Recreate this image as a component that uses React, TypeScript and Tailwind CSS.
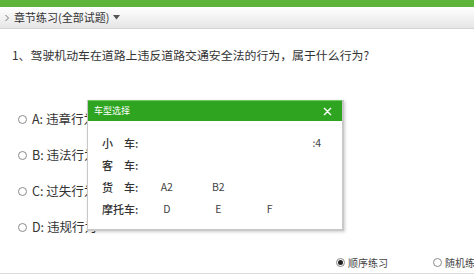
import React from 'react'

const options = ['A: 违章行为', 'B: 违法行为', 'C: 过失行为', 'D: 违规行为']

const carRows: { label: string; items: string[] }[] = [
  { label: '小\u3000车:', items: ['', '', '', ':4'] },
  { label: '客\u3000车:', items: [] },
  { label: '货\u3000车:', items: ['A2', 'B2'] },
  { label: '摩托车:', items: ['D', 'E', 'F'] },
]

function Radio({ checked = false }: { checked?: boolean }) {
  return (
    <span className="flex h-[9px] w-[9px] shrink-0 items-center justify-center rounded-full border border-[#8a8a8a] bg-white">
      {checked && <span className="h-[5px] w-[5px] rounded-full bg-[#222]" />}
    </span>
  )
}

function CarDialog() {
  return (
    <div className="absolute left-[87px] top-[100px] flex h-[131px] w-[257px] flex-col border-r-[2px] border-b-[2px] border-l border-[#c9c9c9] bg-white shadow-[1px_1px_3px_rgba(0,0,0,0.2)]">
      <div className="flex h-[21px] items-center justify-between border-t border-[#6fcb5f] bg-[#2ea420] pl-[6px] pr-[10px]">
        <span className="text-[9px] text-white">车型选择</span>
        <svg width="9" height="9" viewBox="0 0 10 10" className="text-white">
          <path d="M1.5 1.5l7 7M8.5 1.5l-7 7" stroke="currentColor" strokeWidth="1.5" strokeLinecap="round" />
        </svg>
      </div>
      <div className="flex flex-col pl-[14px] pt-[11px]">
        {carRows.map((row) => (
          <div key={row.label} className="flex h-[22px] items-center text-[11px] text-[#333]">
            <span className="w-[39px] font-medium">{row.label}</span>
            {row.items.map((item, i) => (
              <span key={i} className="w-[51.5px] text-center text-[10.5px] text-[#444]">
                {item}
              </span>
            ))}
          </div>
        ))}
      </div>
    </div>
  )
}

export default function App() {
  return (
    <div className="relative flex h-[276px] w-[474px] flex-col overflow-hidden bg-white font-['Noto_Sans_CJK_SC',sans-serif] text-[#333]">
      <div className="h-[7px] bg-[#5fb43c]" />
      <div className="flex h-[22px] items-center gap-[4px] border-b border-[#d4d4d4] bg-gradient-to-b from-white to-[#e6e6e6] pl-[4px]">
        <svg width="6" height="8" viewBox="0 0 6 8">
          <path d="M1.5 1l3 3-3 3" fill="none" stroke="#777" strokeWidth="1" />
        </svg>
        <span className="text-[11px] text-[#333]">章节练习(全部试题)</span>
        <svg width="7" height="5" viewBox="0 0 7 5">
          <path d="M0 0h7L3.5 4.5z" fill="#555" />
        </svg>
      </div>

      <p className="mt-[18px] pl-[12px] text-[11.9px] leading-[16px] text-[#333]">
        1、驾驶机动车在道路上违反道路交通安全法的行为，属于什么行为?
      </p>

      <div className="mt-[46px] flex flex-col gap-[16px] pl-[18px]">
        {options.map((o) => (
          <label key={o} className="flex h-[20px] items-center gap-[5px] text-[12.5px] text-[#333]">
            <Radio />
            <span>{o}</span>
          </label>
        ))}
      </div>

      <div className="mt-auto mb-[2px] flex h-[22px] items-center gap-[45px] whitespace-nowrap border-b border-[#dcdcdc] pl-[336px] text-[10px] text-[#444]">
        <span className="flex items-center gap-[3px]">
          <Radio checked />
          顺序练习
        </span>
        <span className="flex items-center gap-[3px]">
          <Radio />
          随机练习
        </span>
      </div>

      <CarDialog />
    </div>
  )
}
